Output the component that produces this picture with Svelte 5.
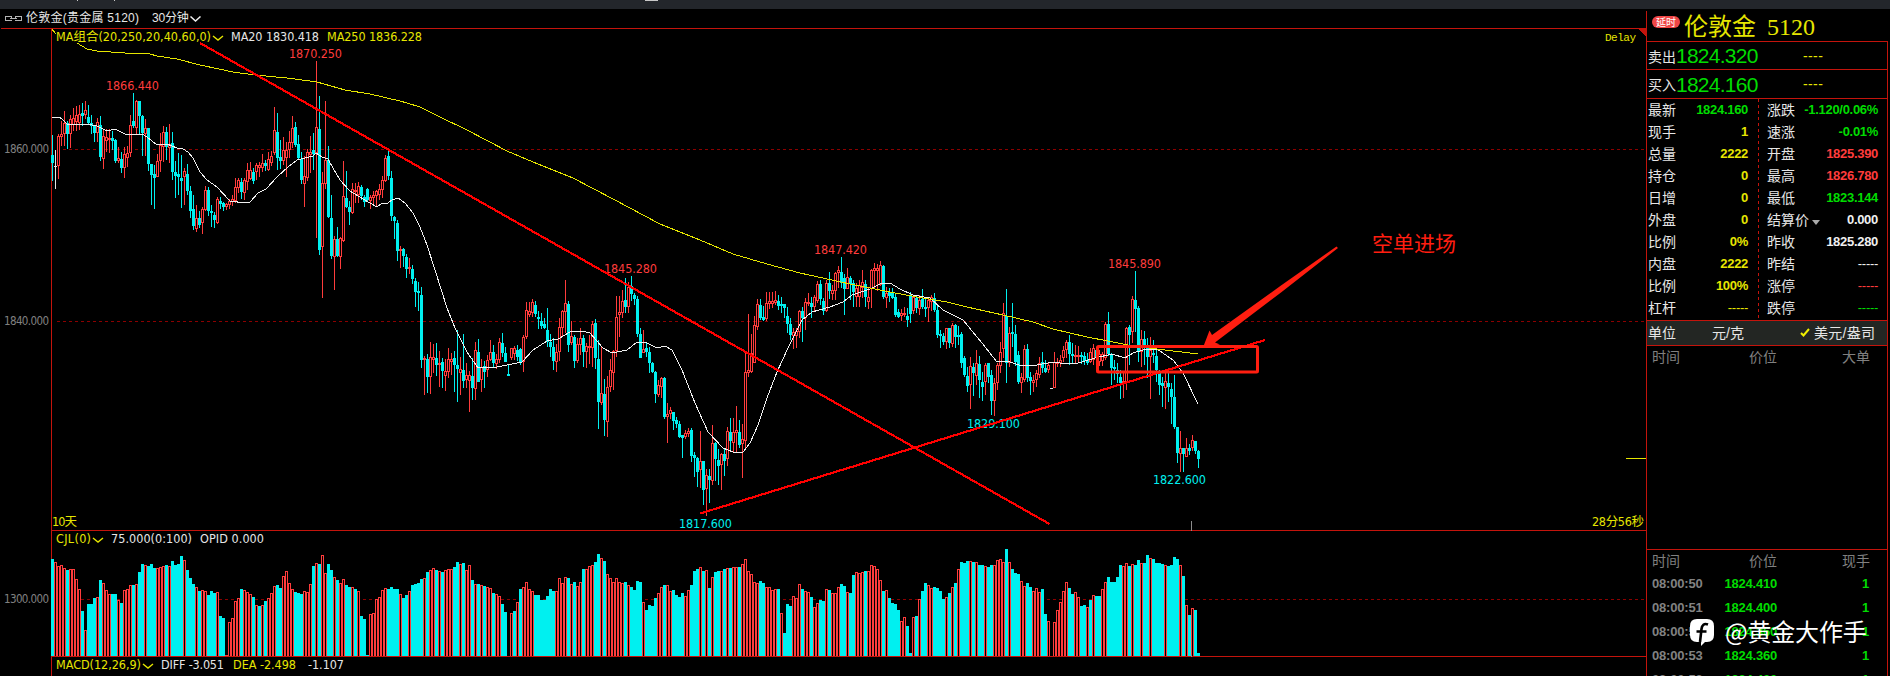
<script>
    // one candle per entry: colour, then high, body top, body bottom, low (pane pixels)
    const candleData = `
        c135,155,163,181 w150,166,167,189 r134,136,166,179 r121,134,137,146 r111,123,134,146 c121,123,134,149 r115,119,134,148 r108,118,125,131 r106,115,122,131 r105,114,123,130
        c103,113,116,126 r101,110,115,119 c105,117,123,125 c115,123,126,134 c125,126,133,142 r118,122,133,142 c116,125,157,161 r130,136,159,169 r129,137,141,152 r129,138,140,153
        c131,138,141,150 c139,140,161,163 r147,158,161,163 c152,159,168,173 r147,154,168,178 r146,153,158,167 r115,125,153,157 c93,121,126,128 r100,101,128,134 c101,101,116,134
        c115,116,133,156 r119,128,134,156 c128,128,164,171 c164,164,175,205 c165,174,178,209 r154,161,177,177 r133,145,161,172 r126,132,147,162 c127,132,147,160 r124,144,148,163
        c132,143,172,180 c161,172,176,198 c153,174,177,195 c155,178,181,208 r168,171,177,205 c164,174,191,195 c186,191,211,218 c195,209,226,230 r205,218,229,232 c211,218,225,228
        r207,209,223,234 r186,190,210,211 c187,190,211,216 c205,211,213,227 c212,215,220,228 r197,199,223,224 c197,201,204,209 c202,203,207,211 r203,204,207,210 r199,201,205,209
        r195,199,202,206 r178,187,201,203 r178,180,188,193 c178,182,192,199 r178,180,193,200 r163,170,182,190 r162,170,179,180 c168,172,181,184 r163,165,172,180 r162,165,168,177
        r154,163,168,172 c160,163,166,171 r152,159,170,171 r151,156,163,166 r107,130,153,155 c113,132,158,170 c140,157,161,169 r137,150,161,165 r142,150,158,177 r131,142,150,158
        r116,128,143,148 c122,127,145,147 c135,144,158,160 c152,159,180,184 r156,176,184,207 r149,152,178,181 r136,152,155,173 c133,150,154,170 r61,127,153,238 c96,129,250,255
        r172,183,247,298 r101,160,184,189 c146,160,217,218 c195,218,256,259 r236,239,257,290 c227,239,256,257 r237,238,257,269 r161,196,241,242 c171,198,207,208 c201,207,212,225
        r183,189,213,214 r183,190,192,203 r182,186,195,203 c185,187,196,200 c195,197,202,207 c188,189,200,202 r195,197,201,209 r191,195,198,205 r190,191,196,207 r184,189,195,200
        r176,180,190,198 r155,158,181,182 c151,156,176,180 c171,178,216,221 c216,217,221,239 c220,223,251,261 r246,249,251,268 c248,249,256,267 c254,257,269,278 r258,267,269,274
        c265,269,279,284 c278,281,292,307 c282,291,293,311 c287,295,360,368 r356,358,360,395 c354,359,377,393 r342,357,377,394 r344,357,360,373 c343,358,365,376 r351,363,365,387
        c358,362,371,388 r359,371,376,391 r348,359,372,378 r353,359,362,375 c351,358,365,392 c330,365,369,402 r357,369,373,395 c334,370,381,388 r363,375,380,388 r371,375,381,412
        c358,376,388,400 r342,350,389,400 c339,352,382,382 r359,367,380,392 c361,366,372,388 r355,360,370,377 r340,352,360,361 c345,352,363,367 r354,359,364,369 r338,342,360,363
        c333,343,353,357 c347,353,362,362 c365,374,376,376 r348,348,358,360 r346,348,354,360 c345,350,357,361 c348,349,362,365 r335,337,362,372 r302,310,337,339 r302,311,315,317
        r299,302,313,317 c301,305,314,317 c311,317,319,329 c313,321,326,329 c318,324,328,329 c308,330,342,347 c334,342,347,357 c338,347,361,370 r344,352,362,372 r318,327,352,361
        r310,311,328,337 r280,303,312,333 c301,304,345,352 r321,336,343,345 c335,337,361,368 r338,344,361,363 r328,338,345,355 c335,338,352,367 r343,346,352,368 r335,346,348,364
        r321,324,348,367 c319,323,358,369 c340,359,402,429 r347,393,403,405 c379,394,420,436 r376,387,422,437 r359,370,387,392 r350,351,373,390 r296,317,351,357 r296,312,315,337
        r290,301,313,318 c278,300,307,313 r282,287,307,313 c276,286,294,301 c293,295,299,305 c296,299,334,337 c328,334,358,358 r330,349,353,353 c342,348,352,357 c347,352,363,373
        c362,363,372,373 c371,372,394,403 r380,385,395,397 r377,378,387,398 c377,378,417,419 r403,414,417,443 r407,410,414,419 c412,412,421,430 c417,420,424,428 c421,424,437,438
        c435,435,438,458 r430,433,437,439 r428,431,434,437 c428,430,456,462 c452,455,458,477 c457,458,472,487 r431,461,470,488 c461,461,490,505 r469,475,489,516 c469,476,480,503
        r425,443,481,485 c442,443,459,481 c449,460,466,485 r453,454,465,490 c448,454,461,476 r427,431,459,466 c418,432,441,452 r418,432,443,452 r406,430,433,452 c420,432,445,448
        r424,439,444,478 r352,372,441,450 r314,370,373,377 r334,353,372,373 r316,325,363,363 r299,304,327,330 c299,305,318,320 c306,317,320,321 r292,303,319,321 r292,301,304,309
        r292,301,304,308 r291,300,303,305 c295,301,306,310 c297,304,306,313 c304,304,308,318 c307,316,324,333 c318,324,335,340 r328,332,336,349 r328,331,336,348 r310,311,332,338
        c307,311,318,342 r298,302,318,330 r293,302,304,306 c297,303,307,318 r295,297,307,312 r281,284,301,303 c280,284,299,305 c298,301,311,315 r280,283,311,312 c272,283,291,299
        r285,290,294,300 r272,273,291,300 r266,270,273,288 c257,272,283,288 c274,278,289,315 r268,277,289,289 c276,278,284,300 c280,283,292,307 r283,288,297,307 r280,285,297,307
        r270,282,288,298 c280,284,297,307 r287,297,302,309 r269,270,289,308 r263,268,271,288 r264,268,271,291 r261,265,285,286 c265,266,297,299 r287,293,298,308 c288,292,296,302
        c288,293,298,299 c294,297,315,317 c309,312,317,318 r309,313,316,321 r307,313,315,317 c308,316,320,327 c292,295,314,323 r296,297,311,314 c295,298,308,313 r295,300,309,315
        c289,299,307,309 c298,307,309,317 r298,300,308,322 r295,297,302,311 c293,298,310,312 c305,310,335,338 c330,334,336,348 c333,336,342,345 r328,328,342,349 c328,328,343,348
        r323,325,344,347 c324,325,337,348 c326,335,337,345 c332,334,363,368 c356,358,375,377 c367,376,386,392 r357,366,385,409 c363,367,373,396 r350,363,376,385 c356,364,380,398
        c372,382,387,401 r363,365,382,395 c363,363,377,383 c370,375,401,415 r378,383,401,416 r363,365,383,390 r342,352,366,373 r303,313,349,358 c289,316,363,383 r327,333,363,367
        c303,332,334,347 c325,334,362,366 c351,355,382,384 r373,377,383,393 r345,349,380,382 c344,349,378,382 c372,377,381,395 r375,380,383,392 r370,373,380,387 r357,363,375,378
        c352,362,368,373 c360,368,372,373 r363,365,370,373 w388,388,389,389 r352,362,388,388 r358,362,364,367 r355,360,363,367 r346,350,358,362 r340,342,350,358 c335,342,354,365
        c343,354,356,364 r345,355,357,363 r346,355,357,363 c352,355,357,364 c352,356,361,365 c353,360,363,365 r348,352,362,363 r344,348,360,365 c347,350,357,365 r350,354,362,366
        r352,354,361,366 r322,324,358,360 c312,324,354,356 c353,355,368,385 c360,367,369,380 c363,370,374,383 c370,377,383,399 r373,381,383,398 r327,328,382,390 c325,327,335,365
        r296,299,332,343 c271,300,309,332 c306,308,352,362 r330,339,352,367 c331,339,348,365 c338,348,357,378 r337,350,357,399 c340,353,355,363 c348,356,370,382 c370,373,385,395
        c377,383,386,407 r372,381,388,409 c372,383,387,402 c383,389,397,424 c375,397,427,429 c427,427,453,463 r431,448,454,472 c448,448,454,472 r438,448,457,457 c444,448,451,455
        r435,440,448,451 c441,441,451,454 c450,451,459,468`;

    // colour and bar height
    const volumeData = `
        c97 r94 r90 r91 r88 c86 r87 r87 r77 r67 c45 r26 c52 c52 c58 r59 c76 r73 r66 r62
        c62 c62 r56 c53 r66 r67 r71 c71 r72 c84 c92 r91 c90 c92 c88 r88 r89 r90 c91 r90
        c95 c91 c92 c100 r96 c86 c78 c72 r69 c65 r66 r65 c61 c65 c63 r64 c40 c38 r1 r34
        r38 r55 r58 c67 r66 r64 r62 c59 r51 c50 r51 c55 r58 r63 r70 c71 c68 r80 r85 r73
        r67 c64 c63 c62 r65 r64 r72 c90 r93 c92 r101 r83 c92 c86 r79 c76 r73 r77 c71 c69
        r69 c67 r65 c40 c37 c1 r42 r43 r57 r59 r66 r68 c67 c69 c67 c67 r62 c58 c61 r65
        c71 c72 c73 c77 r78 c84 r86 r88 c86 r85 c84 r86 r87 r87 c89 c94 r92 c93 r86 r91
        c76 r72 c72 r71 c70 r69 r68 c63 r62 r60 c52 c44 c0 r43 c45 r54 c67 r69 r74 r67
        r65 c61 c61 c56 c56 c60 c67 c65 r65 r78 r73 r79 c78 r72 c74 r70 r74 c87 r87 r90
        r91 c94 c102 r98 c95 r82 r78 r74 r78 r74 r73 c74 r71 c69 c66 c75 c74 r54 c46 c51
        c50 c58 r63 r69 c71 r71 r65 c66 c61 c59 c63 r60 r66 c71 c85 c87 r89 c85 r86 c68
        r79 c84 c85 r85 c87 r88 c88 r89 r89 c89 r92 r97 r85 r82 r74 r73 c75 c73 r69 r69
        r66 r67 c67 r43 c23 c52 c50 r60 r58 r72 c67 r65 r64 c59 r49 r53 c56 c55 r67 c66
        r63 r63 r69 c72 c70 r64 c63 c81 r84 r83 r84 c85 r85 r91 r90 r87 r76 c65 r66 c58
        c53 c52 c46 r35 r39 c30 c3 r39 c40 r57 c65 c73 r71 r68 c69 c68 c65 c57 r59 c63
        r69 c73 r87 c94 c93 c95 r95 c94 r94 c91 c91 r90 c89 c91 r91 r96 r97 r94 c107 r94
        c87 c83 c82 r75 r70 c73 c69 r65 r68 r64 c67 c42 r35 c0 r34 r46 r54 r65 r74 c68
        c62 r64 r59 c50 c51 r49 c56 r61 c60 c60 r67 r74 c79 c74 c74 c79 c91 r90 r93 c90
        r92 c91 c96 r93 c93 c101 r98 c97 c93 c93 c92 r91 c90 c91 c99 c97 r91 c80 r51 c41
        r48 c46 c3`;

    const step = 3;
    const left = 51;
    const base = 656;

    const box = (x, y, w, h) => `M${x} ${y}h${w}v${h}h${-w}z`;

    // every candle owns its own 3px column, so one path per colour is enough
    const candles = { c: '', r: '', w: '', hole: '' };
    candleData.trim().split(/\s+/).forEach((entry, i) => {
        const kind = entry[0];
        const [high, top, bottom, low] = entry.slice(1).split(',').map(Number);
        const x = left + i * step;
        candles[kind] += box(x + 1, high, 1, low - high) + box(x, top, step, bottom - top);
        if (kind === 'r' && bottom - top > 2) {
            candles.hole += box(x + 1, top + 1, 1, bottom - top - 2);
        }
    });

    const bars = { c: '', r: '', hole: '' };
    volumeData.trim().split(/\s+/).forEach((entry, i) => {
        const h = Number(entry.slice(1));
        const x = left + i * step;
        bars[entry[0]] += box(x, base - h, step, h);
        if (entry[0] === 'r' && h > 1) bars.hole += box(x + 1, base - h + 1, 1, h - 1);
    });

    const ma20 = '52,117 57,118 59,117 62,119 68,125 80,124 87,124 97,126 107,131 115,129 127,135 142,134 147,137 157,145 167,144 177,148 183,149 188,152 193,158 200,172 207,180 217,187 230,201 245,203 250,202 258,193 266,189 277,177 288,167 297,160 313,156 316,153 322,157 328,159 333,168 340,180 350,191 358,196 377,207 381,204 388,203 392,200 398,198 405,203 413,213 420,227 427,245 435,270 447,308 455,328 467,352 478,368 497,367 507,365 522,362 533,350 547,341 558,339 570,332 582,331 590,333 603,348 612,353 627,350 637,342 647,343 657,348 665,346 672,350 682,370 695,403 708,432 723,448 733,452 743,452 750,443 758,425 767,398 777,372 788,348 802,320 812,312 830,307 843,302 852,295 870,289 882,283 890,283 900,289 913,295 930,298 943,310 963,320 982,343 997,362 1007,361 1022,366 1037,365 1053,362 1060,363 1075,364 1095,358 1112,354 1125,358 1133,353 1143,350 1157,349 1173,360 1183,373 1198,404';
    const ma250 = '52,29 55,33 77,43 87,49 97,51 125,53 150,54 157,56 177,59 200,65 233,72 255,75 287,78 317,82 345,90 370,94 400,101 407,103 420,107 440,117 467,130 507,151 533,162 573,178 613,199 660,224 700,240 733,254 767,264 800,273 850,284 890,292 917,297 947,302 967,307 1003,315 1033,322 1053,329 1087,337 1108,341 1133,346 1157,349 1198,354';

    const labels = [
        { x: 56, y: 41, w: 155, cls: 'yellow', text: 'MA组合(20,250,20,40,60,0)' },
        { x: 231, y: 41, w: 88, cls: 'white', text: 'MA20 1830.418' },
        { x: 327, y: 41, w: 95, cls: 'yellow', text: 'MA250 1836.228' },
        { x: 106, y: 90, w: 53, cls: 'red', text: '1866.440' },
        { x: 289, y: 58, w: 53, cls: 'red', text: '1870.250' },
        { x: 604, y: 273, w: 53, cls: 'red', text: '1845.280' },
        { x: 814, y: 254, w: 53, cls: 'red', text: '1847.420' },
        { x: 1108, y: 268, w: 53, cls: 'red', text: '1845.890' },
        { x: 967, y: 428, w: 53, cls: 'cyan', text: '1829.100' },
        { x: 1153, y: 484, w: 53, cls: 'cyan', text: '1822.600' },
        { x: 679, y: 528, w: 53, cls: 'cyan', text: '1817.600' },
        { x: 52, y: 526, w: 25, cls: 'yellow', text: '10天' },
        { x: 1592, y: 526, w: 52, cls: 'yellow', text: '28分56秒' },
        { x: 56, y: 543, w: 35, cls: 'yellow', text: 'CJL(0)' },
        { x: 111, y: 543, w: 81, cls: 'white', text: '75.000(0:100)' },
        { x: 200, y: 543, w: 64, cls: 'white', text: 'OPID 0.000' },
        { x: 56, y: 669, w: 85, cls: 'yellow', text: 'MACD(12,26,9)' },
        { x: 161, y: 669, w: 63, cls: 'white', text: 'DIFF -3.051' },
        { x: 233, y: 669, w: 63, cls: 'yellow', text: 'DEA -2.498' },
        { x: 308, y: 669, w: 36, cls: 'white', text: '-1.107' }
    ];

    const axis = [
        { y: 149, text: '1860.000' },
        { y: 321, text: '1840.000' },
        { y: 599, text: '1300.000' }
    ];

    const chevrons = [[213, 36], [93, 538], [143, 664]];

    const quotes = [
        ['最新', '1824.160', 'green', '涨跌', '-1.120/0.06%', 'green'],
        ['现手', '1', 'yellow', '速涨', '-0.01%', 'green'],
        ['总量', '2222', 'yellow', '开盘', '1825.390', 'red'],
        ['持仓', '0', 'yellow', '最高', '1826.780', 'red'],
        ['日增', '0', 'yellow', '最低', '1823.144', 'green'],
        ['外盘', '0', 'yellow', '结算价', '0.000', 'white'],
        ['比例', '0%', 'yellow', '昨收', '1825.280', 'white'],
        ['内盘', '2222', 'yellow', '昨结', '-----', 'white'],
        ['比例', '100%', 'yellow', '涨停', '-----', 'red'],
        ['杠杆', '-----', 'yellow', '跌停', '-----', 'green']
    ];

    const ticks = [
        ['08:00:50', '1824.410', '1'],
        ['08:00:51', '1824.400', '1'],
        ['08:00:52', '1824.360', '1'],
        ['08:00:53', '1824.360', '1'],
        ['08:00:53', '1824.400', '1']
    ];
</script>

<div class="terminal">
    <div class="topbar">
        <svg width="700" height="1" viewBox="0 0 700 1" shape-rendering="crispEdges">
            <path fill="#c8c8c8" d="M77 0h1v1h-1zM114 0h1v1h-1zM645 0h13v1h-13z" />
        </svg>
    </div>
    <div class="body">
        <main>
            <header class="title">
                <svg width="17" height="6" viewBox="0 0 17 6" fill="none" stroke="#b4b4b4" shape-rendering="crispEdges">
                    <path d="M6.500 2V.5h-6v4h6V4M10.500 2V.5h6v4h-6V4M5 2.500h7" />
                </svg>
                <span class="name">伦敦金(贵金属 5120)</span>
                <span class="period">30分钟</span>
                <svg width="11" height="6" viewBox="0 0 11 6" fill="none" stroke="#eee" stroke-width="1.5">
                    <path d="M.5 .5l5 4.5 5-4.5" />
                </svg>
            </header>

            <svg class="chart" width="1647" height="648" viewBox="0 28 1647 648">
                <g class="grid" shape-rendering="crispEdges">
                    {#each axis as line}
                        <path d={`M57 ${line.y + 0.5}H1645`} />
                    {/each}
                </g>
                <g class="axis">
                    {#each axis as line}
                        <text x="4" y={line.y + 4} textLength="45">{line.text}</text>
                    {/each}
                </g>

                <g shape-rendering="crispEdges">
                    <path class="frame" d="M1 28.5H1646M51.5 28V676M51 530.5H1646M51 656.5H1646" />
                    <path fill="#c4140c" d="M1637 28h9v9z" />
                    <path class="red" d={bars.r} />
                    <path class="black" d={bars.hole} />
                    <path class="cyan" d={bars.c} />
                    <path class="red" d={candles.r} />
                    <path class="black" d={candles.hole} />
                    <path class="cyan" d={candles.c} />
                    <path class="white" d={candles.w} />
                    <polyline class="ma20" points={ma20} />
                    <polyline class="ma250" points={ma250} />
                    <path stroke="#e6e600" d="M1626 458.5h20" />
                    <path stroke="#8c8c8c" d="M1191.5 521v10M1191.5 655v2" />
                </g>

                <rect class="black" x="56" y="30" width="368" height="13" />
                <g class="labels">
                    {#each labels as label}
                        <text class={label.cls} x={label.x} y={label.y} textLength={label.w}>{label.text}</text>
                    {/each}
                    <text class="delay yellow" x="1605" y="41">Delay</text>
                </g>
                <g fill="none" stroke="#e6e600" stroke-width="1.4">
                    {#each chevrons as [x, y]}
                        <path d={`M${x} ${y}l5 4 5-4`} />
                    {/each}
                </g>

                <g class="drawing">
                    <path shape-rendering="crispEdges" d="M200 43L1049.500 524M700 513.500L1265 340" />
                    <rect x="1097.500" y="346.500" width="160" height="25.500" rx="1" />
                    <path class="arrow" d="M1203 347.500L1209.500 330.500L1212 335L1281 285.500L1336.500 246.500L1338 248L1281 292.500L1215 342.500L1220 344.500Z" />
                    <text x="1372" y="251" textLength="84">空单进场</text>
                </g>
            </svg>
        </main>

        <aside>
            <div class="symbol">
                <span class="badge">延时</span>
                <span>伦敦金 5120</span>
            </div>
            <div class="panel">
                <div class="deal"><span>卖出</span><b>1824.320</b><i>----</i></div>
                <div class="deal buy"><span>买入</span><b>1824.160</b><i>----</i></div>
                <div class="quotes">
                    {#each quotes as [nameA, valueA, colorA, nameB, valueB, colorB]}
                        <div class="cell">
                            <span>{nameA}</span>
                            <b class={colorA} class:dash={valueA === '-----'}>{valueA}</b>
                        </div>
                        <div class="cell second">
                            <span>{nameB}{#if nameB === '结算价'}<em></em>{/if}</span>
                            <b class={colorB} class:dash={valueB === '-----'}>{valueB}</b>
                        </div>
                    {/each}
                </div>
                <div class="unit">
                    <span>单位</span>
                    <span class="gram">元/克</span>
                    <svg width="10" height="9" viewBox="0 0 10 9" fill="none" stroke="#f0f000" stroke-width="2">
                        <path d="M1 5l2.500 2.500L9 1" />
                    </svg>
                    <span>美元/盎司</span>
                </div>
                <div class="orders">
                    <div class="row head"><span>时间</span><span>价位</span><span>大单</span></div>
                </div>
                <div class="ticks">
                    <div class="row head"><span>时间</span><span>价位</span><span>现手</span></div>
                    {#each ticks as [time, price, size]}
                        <div class="row tick"><span>{time}</span><span>{price}</span><span>{size}</span></div>
                    {/each}
                </div>
            </div>
        </aside>
    </div>

    <div class="watermark">
        <svg width="24" height="27" viewBox="0 0 24 27">
            <path fill="#fff" d="M7 0h10q7 0 7 7v9q0 7-7 7h-2l-4 4v-4H7q-7 0-7-7V7q0-7 7-7z" />
            <path fill="none" stroke="#000" stroke-width="2.600" d="M18 5.500c-4-1.500-6 .5-6.500 4.500l-1.500 13M6.500 12.500h10" />
        </svg>
        <span>@黄金大作手</span>
    </div>
</div>

<style>
    :global(body) {
        background: #000;
    }

    .terminal {
        position: relative;
        width: 1890px;
        height: 676px;
        overflow: hidden;
        background: #000;
        color: #e6e6e6;
        font-family: "Liberation Sans", "Noto Sans CJK SC", sans-serif;
    }

    .topbar {
        height: 9px;
        background: #23262b;
    }

    .topbar svg {
        display: block;
    }

    .body {
        display: flex;
        height: 667px;
    }

    main {
        width: 1646px;
        flex: none;
    }

    .title {
        display: flex;
        align-items: center;
        height: 19px;
        padding-left: 5px;
        font-size: 12px;
        line-height: 19px;
        white-space: pre;
    }

    .name {
        margin-left: 4px;
        width: 126px;
        letter-spacing: 0.25px;
    }

    .period {
        width: 38px;
        letter-spacing: -0.2px;
    }

    .chart {
        display: block;
    }

    .grid {
        stroke: #8c0000;
        stroke-dasharray: 3 3;
    }

    .frame {
        stroke: #c4140c;
        fill: none;
    }

    .axis {
        fill: #808080;
        font: 11.5px "DejaVu Sans Condensed", "DejaVu Sans", sans-serif;
    }

    .labels {
        font: 12.5px "DejaVu Sans Condensed", "DejaVu Sans", "Noto Sans CJK SC", sans-serif;
    }

    .labels .delay {
        font: 11px "Liberation Mono", monospace;
        letter-spacing: -0.5px;
    }

    .red { fill: #ff3c3c; color: #ff3c3c; }
    .cyan { fill: #00f0f0; }
    .white { fill: #e6e6e6; color: #f0f0f0; }
    .yellow { fill: #e6e600; color: #e6e600; }
    .green { color: #00dc00; }
    .black { fill: #000; }

    .ma20,
    .ma250 {
        fill: none;
        stroke: #f0f0f0;
    }

    .ma250 {
        stroke: #e6e600;
    }

    .drawing path {
        fill: none;
        stroke: #ff0000;
        stroke-width: 2.2;
    }

    .drawing rect {
        fill: none;
        stroke: #ff1e10;
        stroke-width: 3;
    }

    .drawing .arrow {
        fill: #ff1e10;
        stroke: none;
    }

    .drawing text {
        fill: #ff1e10;
        font: 21px "Noto Sans CJK SC", sans-serif;
    }

    aside {
        width: 242px;
        margin-top: 2px;
        box-sizing: border-box;
        border-left: 1px solid #c4140c;
    }

    .symbol {
        display: flex;
        height: 30px;
        padding-left: 5px;
        color: #e6e600;
        font: 24px/32px "Liberation Serif", "Noto Sans CJK SC", serif;
        word-spacing: 5px;
        white-space: pre;
    }

    .badge {
        width: 28px;
        height: 12px;
        margin: 5px 4px 0 0;
        border-radius: 6px;
        background: #f04646;
        color: #fff;
        font: 10px/12px "Noto Sans CJK SC", sans-serif;
        text-align: center;
    }

    .panel {
        border-top: 1px solid #c4140c;
        border-right: 1px solid #c4140c;
    }

    .deal {
        display: flex;
        align-items: center;
        height: 27px;
        padding-left: 1px;
        border-bottom: 1px solid #c4140c;
        font-size: 14px;
    }

    .deal.buy {
        height: 28px;
    }

    .deal.buy b {
        padding-top: 2px;
    }

    .deal span {
        width: 28px;
    }

    .deal b {
        width: 127px;
        padding-top: 1px;
        color: #00dc00;
        font-size: 21px;
        font-weight: normal;
        letter-spacing: -0.75px;
    }

    .deal i {
        color: #e6e600;
        font-style: normal;
        letter-spacing: 0.4px;
    }

    .quotes {
        display: grid;
        grid-template-columns: 111px 129px;
        height: 221px;
        grid-auto-rows: 22px;
        border-bottom: 1px solid #c4140c;
        background: repeating-linear-gradient(#c4140c 0 3px, transparent 3px 6px) 111px 0 / 1px 219px no-repeat;
    }

    .cell {
        display: flex;
        justify-content: space-between;
        align-items: center;
        padding: 0 10px 0 1px;
        font-size: 14px;
        line-height: 22px;
    }

    .cell.second {
        padding: 0 9px 0 9px;
    }

    .cell b {
        font-size: 13px;
        letter-spacing: -0.3px;
    }

    .cell .dash {
        font-weight: normal;
        letter-spacing: -0.3px;
    }

    .cell em {
        display: inline-block;
        margin-left: 3px;
        border: 4.500px solid transparent;
        border-top: 5px solid #aaa;
        border-bottom: 0;
    }

    .unit {
        display: flex;
        align-items: center;
        height: 24px;
        padding: 0 10px 2px 1px;
        box-sizing: border-box;
        border-bottom: 1px solid #c4140c;
        background: #232623;
        font-size: 14px;
        white-space: nowrap;
        height: 25px;
    }

    .unit .gram {
        width: 88px;
        margin-left: 36px;
    }

    .unit svg {
        margin-right: 4px;
    }

    .unit span:last-child {
        letter-spacing: 0.3px;
    }

    .orders {
        height: 203px;
        border-bottom: 1px solid #c4140c;
    }

    .ticks {
        height: 127px;
        overflow: hidden;
    }

    .row {
        display: grid;
        grid-template-columns: 60px 65px 93px;
        padding-left: 5px;
        height: 24px;
        font-size: 14px;
        line-height: 24px;
    }

    .row span + span {
        text-align: right;
    }

    .head {
        height: 22px;
        line-height: 22px;
        color: #808080;
    }

    .tick {
        grid-template-columns: 60px 65px 92px;
        color: #00dc00;
        font-size: 13px;
        font-weight: bold;
        letter-spacing: -0.2px;
    }

    .tick span:first-child {
        color: #828282;
    }

    .watermark {
        position: absolute;
        left: 1690px;
        top: 617px;
        display: flex;
        align-items: center;
        gap: 11px;
        color: #fff;
        font: 24px/32px "Noto Sans CJK SC", sans-serif;
        white-space: nowrap;
    }

    .watermark span {
        margin-top: -2px;
        letter-spacing: -0.2px;
    }
</style>
